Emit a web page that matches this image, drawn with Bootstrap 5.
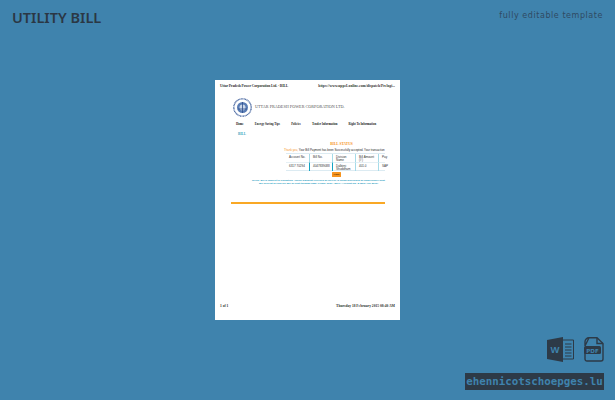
<!DOCTYPE html>
<html lang="en">
<head>
<meta charset="utf-8">
<title>Utility Bill</title>
<link href="https://cdn.jsdelivr.net/npm/bootstrap@5.3.0/dist/css/bootstrap.min.css" rel="stylesheet">
<style>
html,body{height:400px;overflow:hidden}
body{background:#3f83ad;color:#2d3a47;width:615px}
.top-bar{height:80px;padding:8px 12px 0 12px}
.doc-title{font:600 14.5px/18px "Noto Sans",sans-serif;letter-spacing:0;color:#2b3744}
.doc-tag{font:400 8px/14px "DejaVu Sans",sans-serif;letter-spacing:.56px;color:#2f4a63;margin-top:1px}
.sheet{width:185px;height:240px;margin-left:215px;background:#fff;padding:4px 5px 0 5px;font-family:"Liberation Serif",serif;color:#333}
.sheet-head{font-size:3.7px;line-height:4px;font-weight:700;height:4px;white-space:nowrap}
.sheet-head span:first-child{letter-spacing:-.12px}
.brand{padding:9px 0 0 13px;height:30px;gap:3px}
.brand-name{font-size:4.2px;color:#555;line-height:8px;margin-top:-1px;white-space:nowrap}
.menu-row{padding:0 0 0 16px;gap:11.2px;font-size:3px;font-weight:700;line-height:4px;margin-top:4px;white-space:nowrap;color:#222}
.bill-tab{font-size:3.4px;font-weight:700;color:#3aa3bd;padding:6px 0 0 18px;line-height:4px}
.bill-area{width:101px;margin-left:64px;padding-top:6px}
.bill-title{font-size:3.6px;line-height:4px;font-weight:700;color:#f7941d;text-align:center;margin-left:14px}
.bill-thanks{font-size:2.85px;line-height:4px;margin-top:2px;white-space:nowrap;color:#222;font-family:"Liberation Sans",sans-serif}
.bill-thanks span{color:#f7941d}
.bill-grid{display:grid;grid-template-columns:23px 23px 23px 23px 7px;margin:1px 0 0 2px;height:18px;border-top:1px solid #dcebf2;font-size:3px;line-height:3.4px;font-family:"Liberation Sans",sans-serif;color:#333;border-bottom:1px solid #dcebf2}
.bill-cell{padding:2px 0 0 3px;height:8px}
.cell-val{border-top:1px solid #e5f0f5;height:9px;padding-top:2px}
.mark-l{border-left:1px solid #a6dbe8}
.val-l{border-left:1px solid #13a3c2}
.pay-wrap{height:5px;margin-top:1px}
.pay-btn{display:block;width:9px;height:5px;margin-left:48px;background:#f7941d;color:#3b2500;font-size:2.6px;line-height:5px;border-radius:.5px;font-weight:700;text-align:center}
.bill-note{font-size:2.5px;line-height:3.1px;color:#1b9bc0;margin:2px 0 0 -32px;text-align:center;white-space:nowrap;font-family:"Liberation Sans",sans-serif;font-weight:700;width:133px}
.gold-rule{height:1.5px;background:#f9a825;margin:17px 0 0 11px;width:154px}
.sheet-foot{margin-top:100px;font-size:3.6px;line-height:4px;font-weight:700;white-space:nowrap}
.tools{width:615px;padding:17px 11px 0 0;gap:10px}
.site-tag{display:block;margin:11px 11px 0 auto;width:139px;height:17px;background:#2d3a47;color:#3f83ad;font:700 10.8px/17px "DejaVu Sans Mono",monospace;text-align:center;white-space:nowrap}
</style>
</head>
<body>
<div class="top-bar d-flex justify-content-between align-items-start">
  <div class="doc-title">UTILITY BILL</div>
  <div class="doc-tag">fully editable template</div>
</div>
<div class="sheet d-flex flex-column">
  <div class="sheet-head d-flex justify-content-between"><span>Uttar Pradesh Power Corporation Ltd. - BILL</span><span>https://www.uppcLonline.com/dispatch/Prelogi...</span></div>
  <div class="brand d-flex align-items-center">
    <svg width="19" height="19" viewBox="0 0 19 19"><circle cx="9.5" cy="9.5" r="8.7" fill="#fff" stroke="#3f5f9c" stroke-width="1.3" stroke-dasharray="1 .5"/><circle cx="9.5" cy="9.5" r="5.5" fill="#5a7db5"/><circle cx="9.5" cy="9.5" r="3" fill="#cdd9ea"/><path d="M5 11h9M9.5 4v11" stroke="#2d4d8a" stroke-width=".8"/></svg>
    <span class="brand-name">UTTAR PRADESH POWER CORPORATION LTD.</span>
  </div>
  <div class="menu-row d-flex"><span>Home</span><span>Energy Saving Tips</span><span>Policies</span><span>Tender Information</span><span>Right To Information</span></div>
  <div class="bill-tab">BILL</div>
  <div class="bill-area">
    <div class="bill-title">BILL STATUS</div>
    <div class="bill-thanks"><span>Thank you,</span> Your Bill Payment has been Successfully accepted. Your transaction</div>
    <div class="bill-grid">
      <div class="bill-cell">Account No.</div><div class="bill-cell mark-l">Bill No.</div><div class="bill-cell mark-l">Division Name</div><div class="bill-cell mark-l">Bill Amount (₹)</div><div class="bill-cell mark-l">Pay</div>
      <div class="bill-cell cell-val">6317 70294</div><div class="bill-cell cell-val val-l">4047839088</div><div class="bill-cell cell-val val-l">Dalbirni Shuddham</div><div class="bill-cell cell-val mark-l">401.0</div><div class="bill-cell cell-val mark-l">SAP</div>
    </div>
    <div class="pay-wrap"><span class="pay-btn">Close</span></div>
    <div class="bill-note">NOTE: Bill is subject to realization. Online payment received by UPPCL is being processed by Supervisor/Agent<br>Bill Receipt of your bill will be sent through SMS. Please Type: "BILL" Account No. &amp; Mob. (UK 5676)</div>
  </div>
  <div class="gold-rule"></div>
  <div class="sheet-foot d-flex justify-content-between"><span>1 of 1</span><span>Thursday 18 February 2015 08:40 AM</span></div>
</div>
<div class="tools d-flex justify-content-end align-items-start">
  <svg width="27" height="25" viewBox="0 0 27 25">
    <path d="M0 3 16 0V25L0 22Z" fill="#2d3a47"/>
    <path d="M16 3H26.5V22H16" fill="none" stroke="#2d3a47" stroke-width="1"/>
    <path d="M18 7h6.5M18 10h6.5M18 13h6.5M18 16h6.5M18 19h6.5" stroke="#2d3a47" stroke-width="1.2"/>
    <text x="8" y="16" font-family="Liberation Sans, sans-serif" font-size="9.5" font-weight="700" fill="#3f83ad" text-anchor="middle">W</text>
  </svg>
  <svg width="20" height="25" viewBox="0 0 20 25">
    <path d="M5 .8H13L19 6.5V22a2 2 0 0 1-2 2H3a2 2 0 0 1-2-2V16M1 9V4.8a4 4 0 0 1 4-4Z" fill="none" stroke="#2d3a47" stroke-width="1.4"/>
    <path d="M13 1V6.5H19" fill="none" stroke="#2d3a47" stroke-width="1.4"/>
    <rect x="0" y="9" width="17" height="8" rx="1.5" fill="#2d3a47"/>
    <text x="8.5" y="15.5" font-family="DejaVu Sans, sans-serif" font-size="5.6" font-weight="700" fill="#3f83ad" text-anchor="middle">PDF</text>
  </svg>
</div>
<div class="site-tag">ehennicotschoepges.lu</div>
</body>
</html>
